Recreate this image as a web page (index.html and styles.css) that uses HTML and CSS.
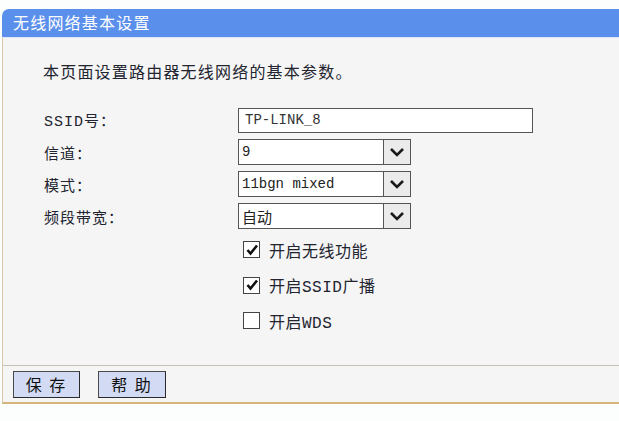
FILE: index.html
```html
<!DOCTYPE html>
<html lang="zh-CN">
<head>
<meta charset="utf-8">
<title>无线网络基本设置</title>
<link rel="stylesheet" href="styles.css">
</head>
<body>
<div class="page">
  <div class="header">无线网络基本设置</div>
  <div class="panel">
    <div class="content">
      <p class="desc">本页面设置路由器无线网络的基本参数。</p>
      <div class="form">
        <div class="row">
          <span class="label"><span class="lat">SSID</span>号：</span>
          <div class="textbox"><span class="lat">TP-LINK_8</span></div>
        </div>
        <div class="row">
          <span class="label">信道：</span>
          <div class="select"><span class="value lat">9</span><span class="arrow"><svg width="18" height="12" viewBox="0 0 18 12"><path d="M3 3 L9 9 L15 3" fill="none" stroke="#1a1a1a" stroke-width="2.6"/></svg></span></div>
        </div>
        <div class="row">
          <span class="label">模式：</span>
          <div class="select"><span class="value lat">11bgn mixed</span><span class="arrow"><svg width="18" height="12" viewBox="0 0 18 12"><path d="M3 3 L9 9 L15 3" fill="none" stroke="#1a1a1a" stroke-width="2.6"/></svg></span></div>
        </div>
        <div class="row">
          <span class="label">频段带宽：</span>
          <div class="select"><span class="value">自动</span><span class="arrow"><svg width="18" height="12" viewBox="0 0 18 12"><path d="M3 3 L9 9 L15 3" fill="none" stroke="#1a1a1a" stroke-width="2.6"/></svg></span></div>
        </div>
      </div>
      <div class="checks">
        <div class="check"><span class="box"><svg width="14" height="14" viewBox="0 0 14 14"><path d="M2.5 7 L5.5 10.5 L12 2.5" fill="none" stroke="#111" stroke-width="2.6"/></svg></span><span>开启无线功能</span></div>
        <div class="check"><span class="box"><svg width="14" height="14" viewBox="0 0 14 14"><path d="M2.5 7 L5.5 10.5 L12 2.5" fill="none" stroke="#111" stroke-width="2.6"/></svg></span><span>开启<span class="lat">SSID</span>广播</span></div>
        <div class="check"><span class="box"></span><span>开启<span class="lat">WDS</span></span></div>
      </div>
    </div>
    <div class="footer">
      <button class="btn btn-save">保 存</button>
      <button class="btn btn-help">帮 助</button>
    </div>
  </div>
</div>
</body>
</html>
```
FILE: styles.css
```css
html, body {
  margin: 0;
  padding: 0;
  background: #fcfdfd;
}
body {
  width: 619px;
  height: 421px;
  overflow: hidden;
  font-family: "Noto Sans CJK SC", "Liberation Sans", sans-serif;
  color: #222430;
}
.page {
  padding-top: 9px;
  padding-left: 2px;
}
.header {
  height: 28px;
  line-height: 27px;
  background: #5b8fec;
  border-top-left-radius: 7px;
  color: #ffffff;
  font-size: 16px;
  letter-spacing: 1.2px;
  padding-left: 11px;
  border-bottom: 1px solid #dde6f6;
}
.panel {
  background: #f5f5f5;
  border-left: 1px solid #d8c9aa;
  border-bottom: 2px solid #d6b57c;
}
.content {
  padding: 23px 0 26px 0;
}
.desc {
  margin: 0 0 26px 40px;
  font-size: 16px;
  line-height: 20px;
  letter-spacing: 1.2px;
}
.lat {
  font-family: "Liberation Mono", "Noto Sans CJK SC", monospace;
}
.form {
  display: flex;
  flex-direction: column;
  gap: 6px;
  padding-left: 41px;
}
.row {
  display: grid;
  grid-template-columns: 194px auto;
  align-items: center;
  height: 26px;
}
.label {
  font-size: 15px;
  letter-spacing: 1px;
}
.textbox {
  width: 287px;
  height: 23px;
  border: 1px solid #555;
  background: #fff;
  box-sizing: content-box;
  display: flex;
  align-items: center;
  padding-left: 6px;
  font-size: 14px;
  color: #333;
}
.select {
  width: 171px;
  height: 24px;
  border: 1px solid #555;
  background: #fff;
  display: flex;
  align-items: stretch;
}
.select .value {
  flex: 1;
  display: flex;
  align-items: center;
  padding-left: 3px;
  font-size: 15px;
  color: #222;
}
.select .value.lat {
  font-size: 14px;
}
.arrow {
  width: 26px;
  background: #ebebeb;
  border-left: 1px solid #555;
  display: flex;
  align-items: center;
  justify-content: center;
}
.checks {
  display: flex;
  flex-direction: column;
  padding-left: 240px;
  padding-top: 3px;
}
.check {
  height: 35.5px;
  display: flex;
  align-items: center;
  gap: 9px;
  font-size: 16px;
  letter-spacing: 0.5px;
}
.box {
  width: 15px;
  height: 15px;
  border: 1px solid #444;
  background: #fff;
  display: flex;
  align-items: center;
  justify-content: center;
}
.footer {
  border-top: 1px solid #c9c2b8;
  padding: 5px 10px 4px;
  display: flex;
  gap: 18px;
}
.btn {
  height: 27px;
  width: 67px;
  margin: 0;
  padding: 0;
  background: #d3dbf4;
  border: 1px solid #4a4a4a;
  border-right-color: #2a2a2a;
  border-bottom-color: #2a2a2a;
  font-family: "Noto Sans CJK SC", sans-serif;
  font-size: 16px;
  color: #111;
  letter-spacing: 2px;
}
.btn-help {
  width: 68px;
}
```
